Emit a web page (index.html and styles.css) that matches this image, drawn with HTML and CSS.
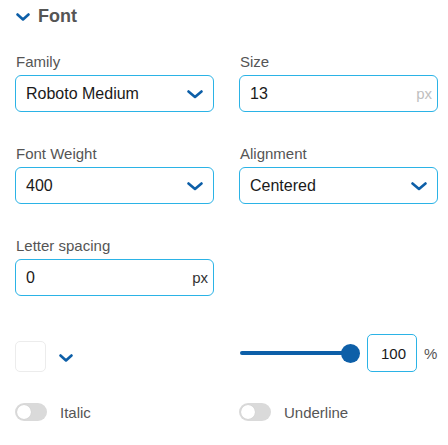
FILE: index.html
```html
<!DOCTYPE html>
<html>
<head>
<meta charset="utf-8">
<link rel="stylesheet" href="styles.css">
</head>
<body>
<div class="panel">
  <div class="header">
    <svg class="chev-title" width="14" height="8" viewBox="0 0 14 8"><path d="M1.5 1.5 L7 6.5 L12.5 1.5" fill="none" stroke="#0d5fa8" stroke-width="2.6" stroke-linecap="round" stroke-linejoin="round"/></svg>
    <span class="title">Font</span>
  </div>

  <div class="grid fields">
    <div class="field">
      <div class="label">Family</div>
      <div class="box select">
        <span class="value">Roboto Medium</span>
        <svg class="chev" width="16" height="9" viewBox="0 0 16 9"><path d="M1.5 1.5 L8 7 L14.5 1.5" fill="none" stroke="#0d5fa8" stroke-width="2.6" stroke-linecap="round" stroke-linejoin="round"/></svg>
      </div>
    </div>
    <div class="field">
      <div class="label">Size</div>
      <div class="box">
        <span class="value">13</span>
        <span class="unit light">px</span>
      </div>
    </div>

    <div class="field">
      <div class="label">Font Weight</div>
      <div class="box select">
        <span class="value">400</span>
        <svg class="chev" width="16" height="9" viewBox="0 0 16 9"><path d="M1.5 1.5 L8 7 L14.5 1.5" fill="none" stroke="#0d5fa8" stroke-width="2.6" stroke-linecap="round" stroke-linejoin="round"/></svg>
      </div>
    </div>
    <div class="field">
      <div class="label">Alignment</div>
      <div class="box select">
        <span class="value">Centered</span>
        <svg class="chev" width="16" height="9" viewBox="0 0 16 9"><path d="M1.5 1.5 L8 7 L14.5 1.5" fill="none" stroke="#0d5fa8" stroke-width="2.6" stroke-linecap="round" stroke-linejoin="round"/></svg>
      </div>
    </div>

    <div class="field">
      <div class="label">Letter spacing</div>
      <div class="box">
        <span class="value">0</span>
        <span class="unit dark">px</span>
      </div>
    </div>
    <div class="field"></div>
  </div>

  <div class="grid row-color">
    <div class="color-cell">
      <div class="swatch"></div>
      <svg class="chev-small" width="14" height="8" viewBox="0 0 14 8"><path d="M1.5 1.5 L7 6.5 L12.5 1.5" fill="none" stroke="#0d5fa8" stroke-width="2.6" stroke-linecap="round" stroke-linejoin="round"/></svg>
    </div>
    <div class="opacity-cell">
      <div class="slider">
        <div class="track"></div>
        <div class="thumb"></div>
      </div>
      <div class="num">100</div>
      <span class="pct">%</span>
    </div>
  </div>

  <div class="grid row-toggles">
    <div class="toggle-cell">
      <div class="toggle"><div class="knob"></div></div>
      <span class="tlabel">Italic</span>
    </div>
    <div class="toggle-cell">
      <div class="toggle"><div class="knob"></div></div>
      <span class="tlabel">Underline</span>
    </div>
  </div>
</div>
</body>
</html>
```

FILE: styles.css
```css
* { box-sizing: border-box; }
html, body {
  margin: 0;
  padding: 0;
  background: #fff;
  font-family: "Liberation Sans", Arial, sans-serif;
}
.panel {
  padding: 5px 10px 0 15px;
  width: 448px;
}
.header {
  display: flex;
  align-items: center;
  height: 22px;
  padding-left: 1px;
}
.chev-title { margin-right: 8px; margin-top: 1px; }
.title {
  font-size: 18px;
  font-weight: bold;
  color: #555;
  line-height: 22px;
}
.grid {
  display: grid;
  grid-template-columns: 199px 199px;
  column-gap: 25px;
}
.fields { margin-top: 26px; row-gap: 33px; }
.field { display: flex; flex-direction: column; }
.label {
  font-size: 15px;
  line-height: 18px;
  color: #555;
  margin-bottom: 4px;
  padding-left: 1px;
}
.box {
  height: 37px;
  border: 1.5px solid #2bb3e6;
  border-radius: 6px;
  display: flex;
  align-items: center;
  justify-content: space-between;
  padding: 0 5px 0 10px;
}
.box.select { padding-right: 10px; }
.value {
  font-size: 16px;
  color: #1a1a1a;
}
.unit { font-size: 15px; }
.unit.light { color: #c0c0c0; }
.unit.dark { color: #333; }
.chev { margin-top: 1px; }

.row-color {
  margin-top: 38px;
  height: 38px;
  align-items: center;
}
.color-cell {
  display: flex;
  align-items: center;
  padding-top: 7px;
}
.swatch {
  width: 31px;
  height: 31px;
  border: 1.5px solid #ececec;
  border-radius: 5px;
  background: #fff;
  margin-right: 13px;
}
.chev-small { margin-top: 3px; }
.opacity-cell {
  display: flex;
  align-items: center;
  padding-left: 1px;
}
.slider {
  position: relative;
  width: 120px;
  height: 20px;
  display: flex;
  align-items: center;
}
.track {
  width: 111px;
  height: 4px;
  background: #0d5fa8;
  border-radius: 2px;
}
.thumb {
  position: absolute;
  left: 101px;
  top: 1px;
  width: 19px;
  height: 19px;
  border-radius: 50%;
  background: #0d5fa8;
}
.num {
  margin-left: 7px;
  width: 50px;
  height: 38px;
  border: 1.5px solid #2bb3e6;
  border-radius: 5px;
  display: flex;
  align-items: center;
  justify-content: flex-end;
  padding-right: 10px;
  font-size: 15px;
  color: #1a1a1a;
}
.pct {
  margin-left: 7px;
  font-size: 15px;
  color: #555;
}
.row-toggles { margin-top: 31px; }
.toggle-cell {
  display: flex;
  align-items: center;
  height: 18px;
}
.toggle {
  width: 32px;
  height: 18px;
  border-radius: 9px;
  background: #dadada;
  position: relative;
  margin-right: 13px;
}
.knob {
  position: absolute;
  left: 2px;
  top: 2px;
  width: 14px;
  height: 14px;
  border-radius: 50%;
  background: #fff;
  box-shadow: 0 0 1px rgba(0,0,0,0.15);
}
.tlabel {
  font-size: 15px;
  color: #555;
}
```
